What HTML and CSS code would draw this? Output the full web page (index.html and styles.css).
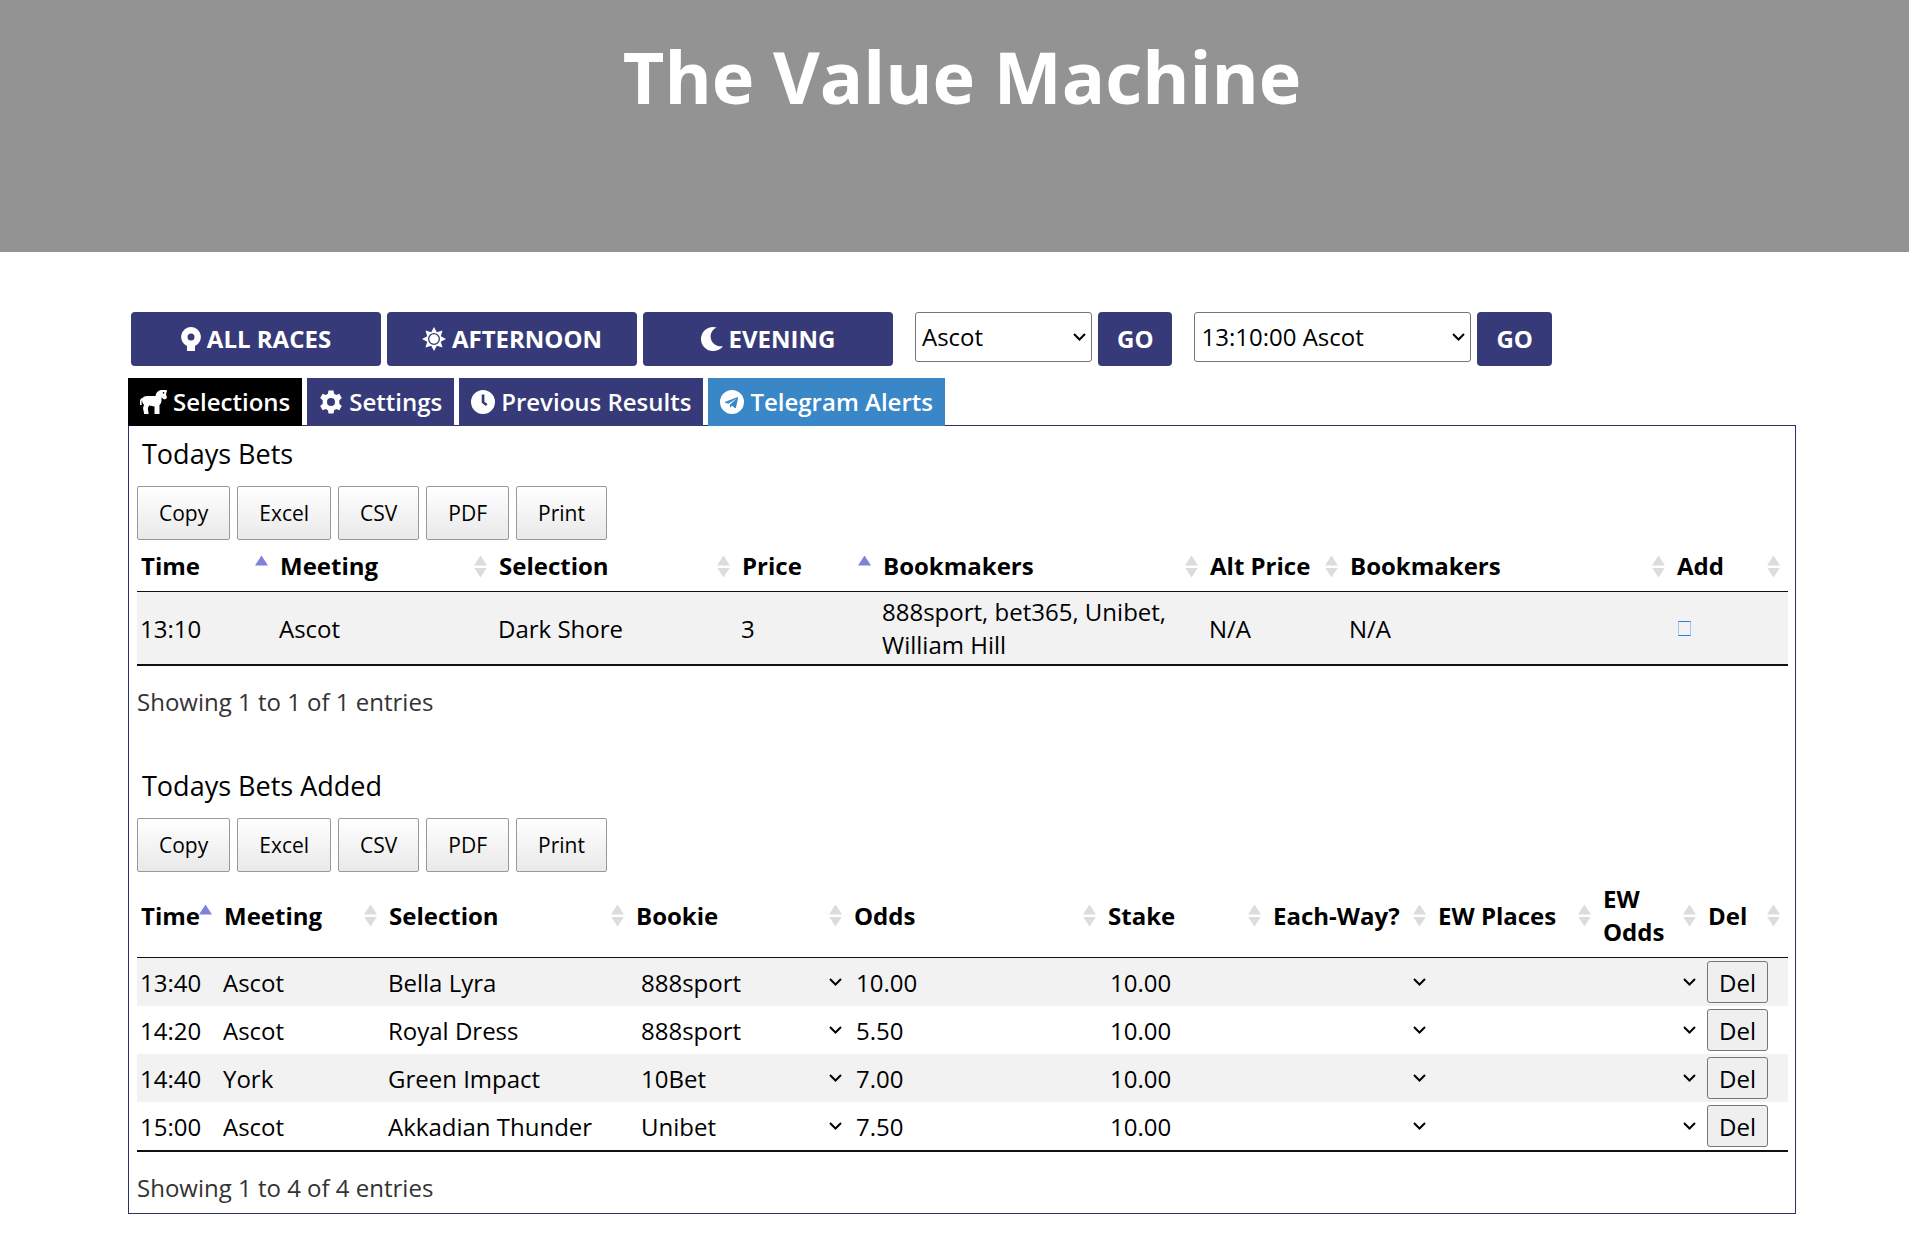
FILE: index.html
```html
<!DOCTYPE html>
<html lang="en">
<head>
    <meta charset="UTF-8">
    <meta name="viewport" content="width=device-width, initial-scale=1.0">
    <title>The Value Machine</title>
    <link rel="stylesheet" href="styles.css">
</head>
<body>
    <header class="banner">
        <h1>The Value Machine</h1>
    </header>
    <main>
        <div class="filters">
            <button type="button" class="btn wide">
                <svg class="icon" viewBox="0 0 20 24"><path fill-rule="evenodd" d="M10 0a10 10 0 0 1 4 19.100V24H6v-4.900A10 10 0 0 1 10 0zm0 6.500a3.500 3.500 0 1 0 0 7 3.500 3.500 0 0 0 0-7z"/></svg>
                ALL RACES
            </button>
            <button type="button" class="btn wide">
                <svg class="icon" viewBox="0 0 24 24"><path fill-rule="evenodd" d="M12 0l2.800 5.200 5.700-1.700-1.700 5.700L24 12l-5.200 2.800 1.700 5.700-5.700-1.700L12 24l-2.800-5.200-5.700 1.700 1.700-5.700L0 12l5.200-2.800-1.700-5.700 5.700 1.700zm0 6a6 6 0 1 0 0 12 6 6 0 0 0 0-12z"/><circle cx="12" cy="12" r="4.700"/></svg>
                AFTERNOON
            </button>
            <button type="button" class="btn wide">
                <svg class="icon" viewBox="0 0 22 24"><path d="M12 0c1.300 0 2.500.2 3.700.6C11.500 2.600 9.500 6 9.700 10c.3 5.500 5 9.800 10.800 9.300.9 0 1.500.3.800 1C19 22.700 15.700 24 12 24A12 12 0 0 1 12 0z"/></svg>
                EVENING
            </button>
            <form class="picker">
                <select class="meeting" aria-label="Meeting">
                    <option>Ascot</option>
                    <option>York</option>
                </select>
                <button type="button" class="btn">GO</button>
            </form>
            <form class="picker">
                <select class="race" aria-label="Race">
                    <option>13:10:00 Ascot</option>
                    <option>13:40:00 Ascot</option>
                </select>
                <button type="button" class="btn">GO</button>
            </form>
        </div>

        <nav class="tabs">
            <a href="#selections" class="active">
                <svg class="icon" viewBox="0 0 27 24"><path fill-rule="evenodd" d="M27 1.200 26.500 0H22c-3.500 0-6 2.500-6.500 6H7C5 6 3.600 6.700 2.700 7.900 1 8 0 9.500 0 11.500V15h1.600v-3.500c0-.6.200-1 .5-1.300 0 2 .7 3.400 2 4.600L3 18l1.200 6h4.500L7.800 18.600 9 15.500l5.500 1V24h5v-9c1.300-1.200 2-2.600 2-4.500V7.200l1.500 1.600 1.600.7 1.900-.9.400-1.200-.9-3.400zM23.500 3.700a.8.800 0 1 1 0-1.600.8.800 0 0 1 0 1.600z"/></svg>
                Selections
            </a>
            <a href="#settings">
                <svg class="icon" viewBox="0 0 24 24"><path fill-rule="evenodd" d="M9.500.5h5l.6 3.200 2.200 1.200 3-1.100 2.500 4.300-2.500 2.100v3.600l2.500 2.100-2.500 4.300-3-1.100-2.200 1.200-.6 3.200h-5l-.6-3.200-2.200-1.200-3 1.100-2.500-4.300 2.500-2.100v-3.600L1.200 8.100l2.500-4.300 3 1.100 2.200-1.200zM12 8a4 4 0 1 0 0 8 4 4 0 0 0 0-8z"/></svg>
                Settings
            </a>
            <a href="#results">
                <svg class="icon" viewBox="0 0 24 24"><path fill-rule="evenodd" d="M12 0a12 12 0 1 1 0 24 12 12 0 0 1 0-24zm-1.300 4.600v8.200l4.200 3.300 1.700-2.100-3.200-2.300V4.600z"/></svg>
                Previous Results
            </a>
            <a href="#telegram" class="telegram">
                <svg class="icon" viewBox="0 0 24 24"><path fill-rule="evenodd" d="M12 0a12 12 0 1 1 0 24 12 12 0 0 1 0-24zM5.400 11.700c-.8.300-.8.800-.1 1l3 1 7-4.500c.4-.2.600 0 .3.200l-5.600 5.100-.2 3c.3 0 .5-.1.700-.3l1.400-1.400 3 2.200c.6.300 1 .2 1.100-.5l2-9.300c.2-.8-.3-1.200-.9-.9z"/></svg>
                Telegram Alerts
            </a>
        </nav>

        <section class="panel" id="selections">
            <div class="block">
                <h2>Todays Bets</h2>
                <div class="export">
                    <button type="button">Copy</button>
                    <button type="button">Excel</button>
                    <button type="button">CSV</button>
                    <button type="button">PDF</button>
                    <button type="button">Print</button>
                </div>
                <table class="bets">
                    <colgroup>
                        <col class="c-time"><col class="c-meeting"><col class="c-selection"><col class="c-price">
                        <col class="c-books"><col class="c-alt"><col class="c-books"><col class="c-add">
                    </colgroup>
                    <thead>
                        <tr>
                            <th class="asc">Time</th>
                            <th>Meeting</th>
                            <th>Selection</th>
                            <th class="asc">Price</th>
                            <th>Bookmakers</th>
                            <th>Alt Price</th>
                            <th>Bookmakers</th>
                            <th>Add</th>
                        </tr>
                    </thead>
                    <tbody>
                        <tr>
                            <td>13:10</td>
                            <td>Ascot</td>
                            <td>Dark Shore</td>
                            <td>3</td>
                            <td>888sport, bet365, Unibet, William Hill</td>
                            <td>N/A</td>
                            <td>N/A</td>
                            <td><a href="#add" class="add" aria-label="Add bet"></a></td>
                        </tr>
                    </tbody>
                </table>
                <p class="info">Showing 1 to 1 of 1 entries</p>
            </div>

            <div class="block">
                <h2>Todays Bets Added</h2>
                <div class="export">
                    <button type="button">Copy</button>
                    <button type="button">Excel</button>
                    <button type="button">CSV</button>
                    <button type="button">PDF</button>
                    <button type="button">Print</button>
                </div>
                <table class="added">
                    <colgroup>
                        <col class="c-time"><col class="c-meeting"><col class="c-selection"><col class="c-bookie"><col class="c-odds">
                        <col class="c-stake"><col class="c-stake"><col class="c-stake"><col class="c-ewodds"><col class="c-del">
                    </colgroup>
                    <thead>
                        <tr>
                            <th class="asc">Time</th>
                            <th>Meeting</th>
                            <th>Selection</th>
                            <th>Bookie</th>
                            <th>Odds</th>
                            <th>Stake</th>
                            <th>Each-Way?</th>
                            <th>EW Places</th>
                            <th>EW Odds</th>
                            <th>Del</th>
                        </tr>
                    </thead>
                    <tbody>
                        <tr>
                            <td>13:40</td>
                            <td>Ascot</td>
                            <td>Bella Lyra</td>
                            <td><select aria-label="Bookie"><option>888sport</option></select></td>
                            <td><input type="text" value="10.00" aria-label="Odds"></td>
                            <td><input type="text" value="10.00" aria-label="Stake"></td>
                            <td><select aria-label="Each-Way"><option></option></select></td>
                            <td><input type="text" aria-label="EW Places"></td>
                            <td><select aria-label="EW Odds"><option></option></select></td>
                            <td><button type="button">Del</button></td>
                        </tr>
                        <tr>
                            <td>14:20</td>
                            <td>Ascot</td>
                            <td>Royal Dress</td>
                            <td><select aria-label="Bookie"><option>888sport</option></select></td>
                            <td><input type="text" value="5.50" aria-label="Odds"></td>
                            <td><input type="text" value="10.00" aria-label="Stake"></td>
                            <td><select aria-label="Each-Way"><option></option></select></td>
                            <td><input type="text" aria-label="EW Places"></td>
                            <td><select aria-label="EW Odds"><option></option></select></td>
                            <td><button type="button">Del</button></td>
                        </tr>
                        <tr>
                            <td>14:40</td>
                            <td>York</td>
                            <td>Green Impact</td>
                            <td><select aria-label="Bookie"><option>10Bet</option></select></td>
                            <td><input type="text" value="7.00" aria-label="Odds"></td>
                            <td><input type="text" value="10.00" aria-label="Stake"></td>
                            <td><select aria-label="Each-Way"><option></option></select></td>
                            <td><input type="text" aria-label="EW Places"></td>
                            <td><select aria-label="EW Odds"><option></option></select></td>
                            <td><button type="button">Del</button></td>
                        </tr>
                        <tr>
                            <td>15:00</td>
                            <td>Ascot</td>
                            <td>Akkadian Thunder</td>
                            <td><select aria-label="Bookie"><option>Unibet</option></select></td>
                            <td><input type="text" value="7.50" aria-label="Odds"></td>
                            <td><input type="text" value="10.00" aria-label="Stake"></td>
                            <td><select aria-label="Each-Way"><option></option></select></td>
                            <td><input type="text" aria-label="EW Places"></td>
                            <td><select aria-label="EW Odds"><option></option></select></td>
                            <td><button type="button">Del</button></td>
                        </tr>
                    </tbody>
                </table>
                <p class="info">Showing 1 to 4 of 4 entries</p>
            </div>
        </section>
    </main>
</body>
</html>
```
FILE: styles.css
```css
* {
    box-sizing: border-box;
}
body {
    margin: 0;
    font-family: "Open Sans", sans-serif;
    font-size: 24px;
    line-height: 33px;
    color: #000;
    background: #fff;
}
button, select, input {
    font-family: inherit;
    font-size: inherit;
    line-height: inherit;
}
.banner {
    min-height: 252px;
    padding: 27px 0 0 15px;
    background: #939393;
    text-align: center;
}
h1 {
    margin: 0;
    font-size: 72px;
    line-height: 98px;
    color: #fff;
}
main {
    margin: 60px 113px 36px 128px;
}

/* race filters */
.filters {
    display: flex;
    flex-wrap: wrap;
    align-items: flex-start;
    gap: 6px;
    padding-left: 3px;
}
.picker {
    display: flex;
    gap: 6px;
    margin-left: 16px;
}
.btn {
    display: flex;
    align-items: center;
    justify-content: center;
    gap: 6px;
    height: 54px;
    padding: 0 19px 2px;
    border: none;
    border-radius: 4px;
    background: #373a78;
    color: #fff;
    font-weight: 700;
    cursor: pointer;
}
.wide {
    width: 250px;
}
select {
    appearance: none;
    color: #000;
    background: transparent url("data:image/svg+xml,%3Csvg xmlns='http://www.w3.org/2000/svg' width='13' height='9'%3E%3Cpath d='M1 1l5.500 5.500L12 1' fill='none' stroke='%23000' stroke-width='2'/%3E%3C/svg%3E") no-repeat right 5px center;
}
.picker select {
    height: 50px;
    padding: 0 6px 2px;
    border: 1px solid #767676;
    border-radius: 3px;
}
.meeting {
    width: 177px;
}
.race {
    width: 277px;
}
.icon {
    height: 24px;
    margin-top: 2px;
    fill: currentColor;
}

/* tabs */
.tabs {
    display: flex;
    gap: 5px;
    margin-top: 12px;
}
.tabs a {
    position: relative;
    display: flex;
    align-items: center;
    gap: 6px;
    height: 48px;
    padding: 0 12px 2px;
    background: #373a78;
    color: #fff;
    font-weight: 600;
    text-decoration: none;
}
.tabs .active {
    background: #000;
}
.tabs .telegram {
    background: #3a87c8;
}
.panel {
    margin-top: -1px;
    padding: 9px 7px 9px 8px;
    border: 1px solid #2c2f70;
}
.block + .block {
    margin-top: 49px;
}
h2 {
    margin: 0 0 14px 5px;
    font-size: 27px;
    font-weight: 400;
    line-height: 37px;
}
.export {
    display: flex;
    gap: 7px;
}
.export button {
    height: 54px;
    padding: 0 21px;
    border: 1px solid #999;
    border-radius: 2px;
    background: linear-gradient(to bottom, #fff 0%, #e9e9e9 100%);
    color: #000;
    font-size: 21px;
    cursor: pointer;
}

/* data tables */
table {
    width: 100%;
    table-layout: fixed;
    border-collapse: separate;
    border-spacing: 0;
    border-bottom: 2px solid #111;
}
th {
    position: relative;
    padding: 9px 22px 9px 4px;
    border-bottom: 1px solid #111;
    font-weight: 700;
    text-align: left;
    cursor: pointer;
}
td {
    padding: 3px;
}
tbody tr:nth-child(odd) {
    background: #f2f2f2;
}
th::before, th::after {
    content: "";
    position: absolute;
    right: 8px;
    top: calc(50% - 10px);
    width: 13px;
    height: 10px;
    background: #dcdcdc;
    clip-path: polygon(50% 0, 100% 100%, 0 100%);
}
th::after {
    top: calc(50% + 2px);
    clip-path: polygon(0 0, 100% 0, 50% 100%);
}
th.asc::before {
    background: #7f82d8;
}
th.asc::after {
    display: none;
}
.bets .c-time { width: 139px; }
.bets .c-meeting { width: 219px; }
.bets .c-selection { width: 243px; }
.bets .c-price { width: 141px; }
.bets .c-books { width: 327px; }
.bets .c-alt { width: 140px; }
.bets .c-add { width: 115px; }
.added .c-time { width: 83px; }
.added .c-meeting { width: 165px; }
.added .c-selection { width: 247px; }
.added .c-bookie { width: 218px; }
.added .c-odds { width: 254px; }
.added .c-stake { width: 165px; }
.added .c-ewodds { width: 105px; }
.added .c-del { width: 84px; }
.added th {
    padding-top: 10px;
}
.added th:first-child {
    padding-right: 0;
}
.added td {
    height: 48px;
    white-space: nowrap;
}
td select, td input {
    display: block;
    width: 100%;
    height: 33px;
    padding: 0 3px;
    border: none;
    color: #000;
}
td input {
    background: transparent;
}
td select {
    padding: 0 6px;
}
td button {
    display: block;
    height: 42px;
    padding: 0 11px;
    border: 1px solid #767676;
    border-radius: 3px;
    background: #efefef;
    color: #000;
}
.add {
    display: block;
    width: 13px;
    height: 15px;
    margin-left: 2px;
    border: 1px solid #2f7be5;
    border-left-color: #a9c2f0;
    border-right-color: #a9c2f0;
}
.info {
    margin: 19px 0 0;
    color: #333;
}
```
